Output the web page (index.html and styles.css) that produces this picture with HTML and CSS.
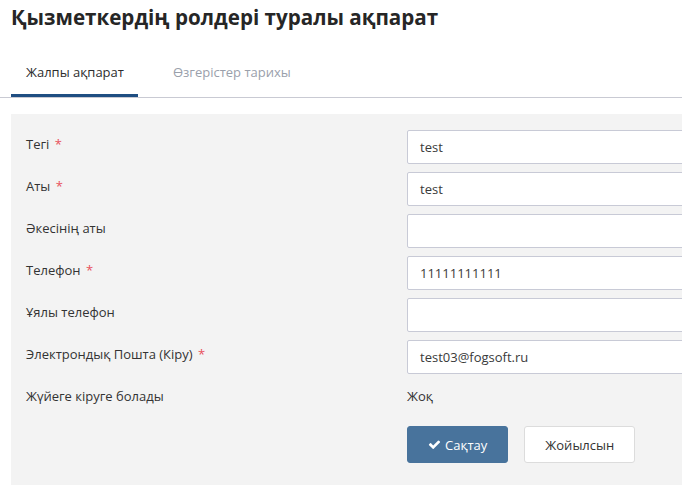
FILE: index.html
```html
<!DOCTYPE html>
<html lang="kk">
<head>
<meta charset="utf-8">
<title>Қызметкердің ролдері туралы ақпарат</title>
<link rel="stylesheet" href="styles.css">
</head>
<body>
<div class="page">
  <h1 class="title">Қызметкердің ролдері туралы ақпарат</h1>
  <div class="tabs">
    <div class="tab active">Жалпы ақпарат</div>
    <div class="tab">Өзгерістер тарихы</div>
  </div>
  <div class="panel">
    <div class="form">
      <div class="row">
        <div class="label">Тегі <span class="req">*</span></div>
        <div class="input">test</div>
      </div>
      <div class="row">
        <div class="label">Аты <span class="req">*</span></div>
        <div class="input">test</div>
      </div>
      <div class="row">
        <div class="label">Әкесінің аты</div>
        <div class="input"></div>
      </div>
      <div class="row">
        <div class="label">Телефон <span class="req">*</span></div>
        <div class="input">11111111111</div>
      </div>
      <div class="row">
        <div class="label">Ұялы телефон</div>
        <div class="input"></div>
      </div>
      <div class="row">
        <div class="label">Электрондық Пошта (Кіру) <span class="req">*</span></div>
        <div class="input">test03@fogsoft.ru</div>
      </div>
      <div class="row static">
        <div class="label">Жүйеге кіруге болады</div>
        <div class="value">Жоқ</div>
      </div>
      <div class="row actions">
        <div class="label"></div>
        <div class="buttons">
          <button class="btn primary"><svg class="check" viewBox="0 0 1792 1792" width="13" height="13"><path fill="#fff" d="M1671 566q0 40-28 68l-724 724-136 136q-28 28-68 28t-68-28l-136-136-362-362q-28-28-28-68t28-68l136-136q28-28 68-28t68 28l294 295 656-657q28-28 68-28t68 28l136 136q28 28 28 68z"/></svg>Сақтау</button>
          <button class="btn">Жойылсын</button>
        </div>
      </div>
    </div>
  </div>
</div>
</body>
</html>
```
FILE: styles.css
```css
html, body {
  margin: 0;
  padding: 0;
  overflow: hidden;
  background: #fff;
}
body {
  font-family: "Open Sans", "Noto Sans", sans-serif;
  font-size: 13px;
  color: #333;
  width: 682px;
  height: 485px;
}
.page {
  width: 1000px;
}
.title {
  margin: 3px 0 19px 11px;
  font-size: 20.6px;
  line-height: 28px;
  font-weight: 700;
  color: #262626;
}
.tabs {
  display: flex;
  gap: 20px;
  padding-left: 11px;
  border-bottom: 1px solid #c9cad3;
}
.tab {
  padding: 13px 14px 13px 15px;
  line-height: 18px;
  border-bottom: 3px solid transparent;
  color: #9aa0ab;
}
.tab.active {
  color: #2d2d2d;
  border-bottom-color: #1f4e82;
}
.panel {
  margin: 16px 0 0 11px;
  background: #f3f3f3;
  padding: 16px 0 30px 15px;
}
.form {
  display: flex;
  flex-direction: column;
  gap: 8px;
}
.row {
  display: grid;
  grid-template-columns: 381px 1fr;
}
.label {
  padding-top: 5px;
  line-height: 18px;
  color: #333;
}
.req {
  color: #e8505b;
  margin-left: 2px;
}
.input {
  height: 18px;
  line-height: 18px;
  padding: 7px 12px;
  background: #fff;
  border: 1px solid #c8cad6;
  border-radius: 2px;
  color: #3a3a3a;
}
.static {
  min-height: 36px;
}
.value {
  padding-top: 5px;
  line-height: 18px;
  color: #333;
}
.buttons {
  display: flex;
  gap: 16px;
}
.btn {
  font-family: "Open Sans", "Noto Sans", sans-serif;
  font-size: 13px;
  height: 37px;
  padding: 0 20px;
  border: 1px solid #dcdcdc;
  border-radius: 3px;
  background: #fff;
  color: #333;
  display: flex;
  align-items: center;
  gap: 4px;
}
.btn.primary {
  background: #48739c;
  border-color: #48739c;
  color: #fff;
  padding: 0 20px;
}
.check {
  display: block;
}
```
